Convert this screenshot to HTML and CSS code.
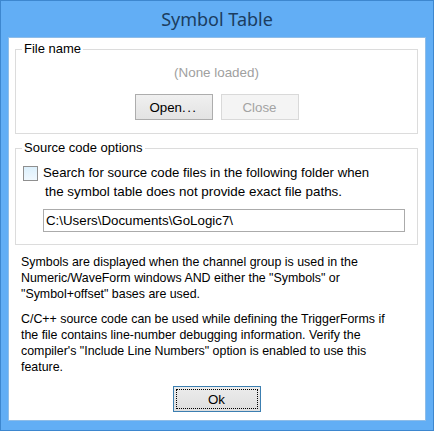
FILE: index.html
```html
<!DOCTYPE html>
<html lang="en">
<head>
  <meta charset="UTF-8" />
  <title>Symbol Table</title>
  <link rel="stylesheet" href="styles.css">
</head>
<body>
  <div class="window">
    <div class="titlebar">Symbol Table</div>

    <div class="client">
      <fieldset class="group file-group">
        <legend>File name</legend>
        <div class="none-loaded">(None loaded)</div>
        <div class="btn-row">
          <button class="btn">Open<span class="dots">...</span></button>
          <button class="btn" disabled>Close</button>
        </div>
      </fieldset>

      <fieldset class="group source-group">
        <legend>Source code options</legend>
        <div class="source-body">
          <label class="check-row">
            <span class="checkbox"></span>
            <span>Search for source code files in the following folder when</span>
          </label>
          <div class="check-more">the symbol table does not provide exact file paths.</div>
          <input class="path" type="text" value="C:\Users\Documents\GoLogic7\" />
        </div>
      </fieldset>

      <div class="notes">
        <p>Symbols are displayed when the channel group is used in the<br>
        Numeric/WaveForm windows AND either the "Symbols" or<br>
        "Symbol+offset" bases are used.</p>
        <p>C/C++ source code can be used while defining the TriggerForms if<br>
        the file contains line-number debugging information. Verify the<br>
        compiler's "Include Line Numbers" option is enabled to use this<br>
        feature.</p>
      </div>

      <div class="ok-row">
        <button class="btn btn-ok">Ok</button>
      </div>
    </div>
  </div>
</body>
</html>
```

FILE: styles.css
```css
body {
  margin: 0;
  background: #ffffff;
  font-family: 'Liberation Sans', Arial, sans-serif;
  font-size: 13px;
  line-height: 16px;
  color: #000;
}

.window {
  width: 434px;
  height: 431px;
  box-sizing: border-box;
  border: 1px solid #3d87cf;
  background: #62aef5;
  display: flex;
  flex-direction: column;
}

.titlebar {
  height: 36px;
  flex: none;
  text-align: center;
  font-family: 'Noto Sans', 'Open Sans', sans-serif;
  font-size: 18px;
  line-height: 37px;
  color: #1b3d60;
}

.client {
  height: 384px;
  box-sizing: border-box;
  margin: 0 7px;
  border: 1px solid #8fbde8;
  background: #fff;
  padding: 3px 7px 0 6px;
}

.group {
  margin: 0;
  padding: 0;
  border: 1px solid #dcdcdc;
  min-width: 0;
}

.group legend {
  margin-left: 6px;
  padding: 0 2px;
  line-height: 16px;
}

.file-group {
  padding: 8px 0 13px;
}

.none-loaded {
  text-align: center;
  font-size: 13.4px;
  color: #a0a0a0;
}

.btn-row {
  display: flex;
  justify-content: center;
  gap: 8px;
  margin-top: 13px;
}

.btn {
  width: 78px;
  height: 26px;
  font-family: 'Liberation Sans', Arial, sans-serif;
  font-size: 13.3px;
  color: #000;
  border: 1px solid #adadad;
  background: linear-gradient(#f0f0f0, #e3e3e3);
  padding: 0;
}

.btn .dots {
  letter-spacing: 1.5px;
}

.btn:disabled {
  color: #a3a3a3;
  border-color: #d9d9d9;
  background: #f4f4f4;
}

.source-group {
  margin-top: 6px;
}

.source-body {
  padding: 9px 12px 12px 7px;
  font-size: 13.2px;
}

.check-row {
  display: flex;
  align-items: center;
  gap: 5px;
}

.checkbox {
  width: 13px;
  height: 13px;
  flex: none;
  border: 1px solid #8f8f8f;
  background: linear-gradient(#dcf0fc, #f0f8fe);
}

.check-more {
  margin-top: 3px;
  padding-left: 22px;
  font-size: 13.4px;
}

.path {
  display: block;
  box-sizing: border-box;
  width: 362px;
  height: 23px;
  margin: 9px 0 0 20px;
  padding: 0 2px;
  border: 1px solid #ababab;
  font-family: 'Liberation Sans', Arial, sans-serif;
  font-size: 13.3px;
  color: #000;
}

.notes {
  margin-top: 9px;
  padding-left: 6px;
  font-size: 12.4px;
  white-space: nowrap;
}

.notes p {
  margin: 0 0 9px;
}

.ok-row {
  display: flex;
  justify-content: center;
  margin-top: 11px;
}

.btn-ok {
  width: 88px;
  height: 26px;
  border-color: #3c7fb1;
  background: linear-gradient(#ececec, #dedede);
  outline: 1px dotted #000;
  outline-offset: -4px;
}
```
